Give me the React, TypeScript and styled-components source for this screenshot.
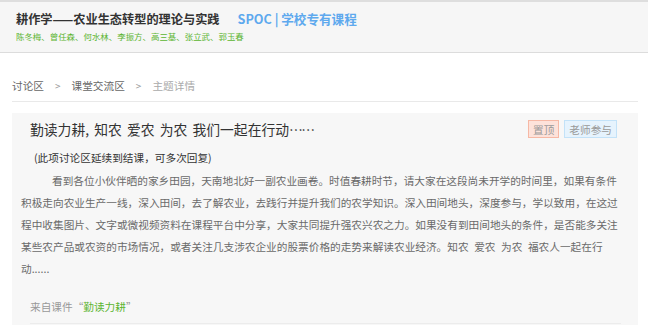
import React from "react";
import styled, { createGlobalStyle } from "styled-components";

const GlobalStyle = createGlobalStyle`
  * { box-sizing: border-box; }
  html, body { margin: 0; padding: 0; background: #ffffff; }
  body {
    font-family: "Noto Sans CJK SC", "Noto Sans", sans-serif;
    color: #333;
    width: 648px;
    overflow: hidden;
  }
`;

const Header = styled.header`
  height: 53px;
  border-top: 2px solid #dedede;
  border-bottom: 1px solid #dcdcdc;
  background: #f6f6f6;
  padding: 9px 0 0 16px;
  display: flex;
  flex-direction: column;
`;

const TitleRow = styled.div`
  display: flex;
  align-items: center;
  gap: 18px;
  height: 16px;
`;

const CourseName = styled.h1`
  margin: 0;
  font-size: 12.2px;
  line-height: 16px;
  font-weight: 700;
  color: #333;
`;

const CourseType = styled.span`
  font-size: 12.6px;
  line-height: 16px;
  font-weight: 700;
  color: #5ea9ee;
`;

const Authors = styled.div`
  margin-top: 3px;
  font-size: 8.45px;
  line-height: 12px;
  color: #5cb531;
`;

const Breadcrumb = styled.nav`
  margin: 0 10px 0 12px;
  padding: 25px 0 7px;
  border-bottom: 1px solid #e9e9e9;
  display: flex;
  align-items: center;
  font-size: 10.66px;
  line-height: 16px;
`;

const Crumb = styled.span<{ $current?: boolean }>`
  color: ${(p) => (p.$current ? "#aaaaaa" : "#666666")};
`;

const Sep = styled.span`
  color: #999;
  margin: 0 11px;
  font-size: 10px;
`;

const Card = styled.section`
  margin: 11px 10px 0 12px;
  background: #f7f7f7;
  padding: 7px 17px 0 18px;
  min-height: 240px;
`;

const TopicRow = styled.div`
  display: flex;
  align-items: center;
  justify-content: space-between;
  height: 18px;
`;

const TopicTitle = styled.h2`
  margin: 0;
  font-size: 13.8px;
  line-height: 18px;
  font-weight: 400;
  color: #333;
  word-spacing: 0.15em;
`;

const Dots = styled.span`
  letter-spacing: -0.12em;
`;

const Tags = styled.div`
  display: flex;
  gap: 5px;
  margin-right: 4px;
`;

const Tag = styled.span<{ $tone: "red" | "blue" }>`
  height: 18px;
  padding: 0 4px;
  display: flex;
  align-items: center;
  font-size: 10.66px;
  color: #999;
  background: ${(p) => (p.$tone === "red" ? "#fde2da" : "#e6f3fd")};
  border: 1px solid ${(p) => (p.$tone === "red" ? "#f6b8a5" : "#c3e2f8")};
`;

const Notice = styled.p`
  margin: 12px 0 0;
  padding-left: 4px;
  font-size: 10.66px;
  line-height: 16px;
  color: #333;
`;

const Body = styled.p`
  margin: 4px 0 0 -9px;
  width: 600px;
  font-size: 10.66px;
  line-height: 22px;
  color: #6a6a6a;
  text-indent: 31px;
  word-spacing: 0.3em;
`;

const NoBreak = styled.span`
  white-space: nowrap;
`;

const Source = styled.div`
  margin-top: 19px;
  padding-bottom: 8px;
  border-bottom: 1px solid #ececec;
  font-size: 10.66px;
  line-height: 16px;
  color: #999;
`;

const SourceLink = styled.span`
  color: #5cb531;
`;

export default function App() {
  return (
    <>
      <GlobalStyle />
      <Header>
        <TitleRow>
          <CourseName>耕作学——农业生态转型的理论与实践</CourseName>
          <CourseType>SPOC | 学校专有课程</CourseType>
        </TitleRow>
        <Authors>陈冬梅、曾任森、何水林、李振方、高三基、张立武、郭玉春</Authors>
      </Header>
      <Breadcrumb>
        <Crumb>讨论区</Crumb>
        <Sep>&gt;</Sep>
        <Crumb>课堂交流区</Crumb>
        <Sep>&gt;</Sep>
        <Crumb $current>主题详情</Crumb>
      </Breadcrumb>
      <Card>
        <TopicRow>
          <TopicTitle>
            勤读力耕, 知农 爱农 为农 我们一起在行动<Dots>……</Dots>
          </TopicTitle>
          <Tags>
            <Tag $tone="red">置顶</Tag>
            <Tag $tone="blue">老师参与</Tag>
          </Tags>
        </TopicRow>
        <Notice>(此项讨论区延续到结课，可多次回复)</Notice>
        <Body>
          看到各位小伙伴晒的家乡田园，天南地北好一副农业画卷。时值春耕时节，请大家在这段尚未开学的时间里，如果有条件积极走向农业生产一线，深入田间，去了解农业，去践行并提升我们的农学知识。深入田间地头，深度参与，学以致用，在这过程中收集图片、文字或微视频资料在课程平台中分享，大家共同提升强农兴农之力。如果没有到田间地头的条件，是否能多关注某些农产品或农资的市场情况，或者关注几支涉农企业的股票价格的走势来解读农业经济。知农 爱农 为农 福农人一起在行<NoBreak>动......</NoBreak>
        </Body>
        <Source>
          来自课件“<SourceLink>勤读力耕</SourceLink>”
        </Source>
      </Card>
    </>
  );
}
